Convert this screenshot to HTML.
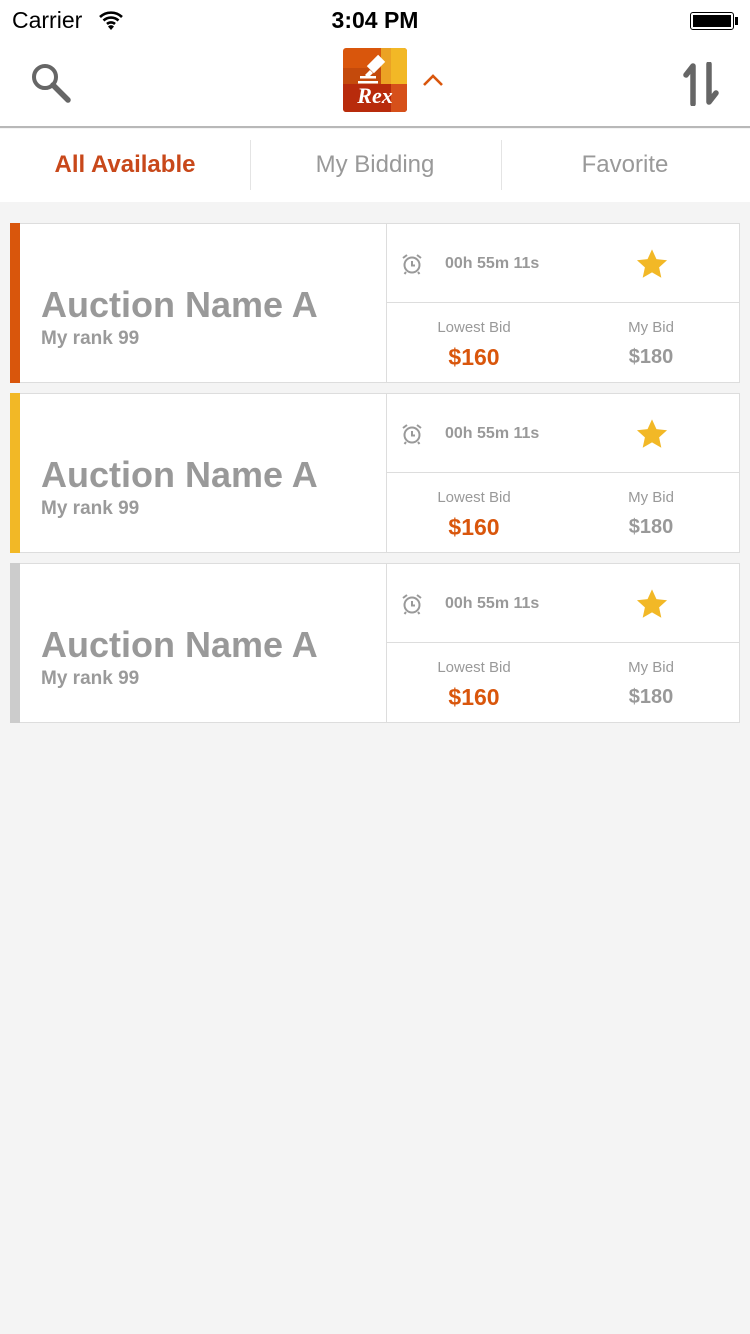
<!DOCTYPE html>
<html><head><meta charset="utf-8"><style>
*{margin:0;padding:0;box-sizing:border-box}
body{width:750px;height:1334px;background:#f4f4f4;font-family:"Liberation Sans",sans-serif;position:relative;overflow:hidden}
.abs{position:absolute}
.top{left:0;top:0;width:750px;height:128px;background:#fff;border-bottom:2px solid #b8b8b8}
.tabs{left:0;top:129px;width:750px;height:73px;background:#fff}
.tab{position:absolute;top:0;height:73px;line-height:72px;text-align:center;font-size:24px;color:#999;width:250px}
.sep{position:absolute;top:11px;width:1px;height:50px;background:#e4e4e4}
.card{position:absolute;left:10px;width:730px;height:160px;background:#fff;border:1px solid #ddd}
.bar{position:absolute;left:-1px;top:-1px;width:10px;height:160px}
.name{position:absolute;left:30px;top:60px;font-size:36px;font-weight:bold;color:#999}
.rank{position:absolute;left:30px;top:104px;font-size:19px;font-weight:bold;color:#9a9a9a}
.vl{position:absolute;left:375px;top:0;width:1px;height:158px;background:#ddd}
.hl{position:absolute;left:375px;top:78px;width:354px;height:1px;background:#ddd}
.time{position:absolute;left:434px;top:31px;font-size:16px;font-weight:bold;color:#999}
.lbl{position:absolute;top:95px;font-size:15px;color:#999;text-align:center;width:150px}
.val{position:absolute;top:120px;font-size:23px;font-weight:bold;text-align:center;width:150px}
</style></head><body>
<div class="abs top">
 <div class="abs" style="left:12px;top:7px;font-size:23px;color:#000">Carrier</div>
 <svg class="abs" style="left:98px;top:10px" width="26" height="20" viewBox="0 0 26 20"><path d="M2 7a16 16 0 0 1 22 0M5.5 10.5a11 11 0 0 1 15 0M9 14a6 6 0 0 1 8 0" stroke="#000" stroke-width="2.6" fill="none"/><path d="M13 20l-3-3.5a4 4 0 0 1 6 0z"/></svg>
 <div class="abs" style="left:0;width:750px;top:7px;text-align:center;font-size:23px;font-weight:bold">3:04 PM</div>
 <div class="abs" style="left:690px;top:12px;width:44px;height:18px;border:1.5px solid #000;border-radius:3px;padding:2px"><div style="background:#000;width:100%;height:100%"></div></div>
 <div class="abs" style="left:735px;top:17px;width:3px;height:8px;background:#000"></div>
 <svg class="abs" style="left:30px;top:62px" width="44" height="42" viewBox="0 0 44 42"><circle cx="15" cy="15" r="11" stroke="#666" stroke-width="4" fill="none"/><path d="M23 23l15 15" stroke="#666" stroke-width="5.5" stroke-linecap="round"/></svg>
 <div class="abs" style="left:343px;top:48px;width:64px;height:64px;border-radius:3px;overflow:hidden;background:#d9560c">
  <div class="abs" style="left:48px;top:0;width:16px;height:36px;background:#f2b826"></div>
  <div class="abs" style="left:38px;top:0;width:10px;height:36px;background:#eba224"></div>
  <div class="abs" style="left:0;top:20px;width:38px;height:16px;background:#c44a0c"></div>
  <div class="abs" style="left:0;top:36px;width:64px;height:28px;background:#b82b0c"></div>
  <div class="abs" style="left:48px;top:36px;width:16px;height:28px;background:#d6501a"></div>
  <svg class="abs" style="left:12px;top:2px" width="40" height="34" viewBox="0 0 40 34"><g fill="#fff"><rect x="16" y="6" width="10" height="16" transform="rotate(45 21 14)"/><path d="M10 25l5-5 3 3-5 5z"/><rect x="5" y="26" width="16" height="2.5"/><rect x="3" y="31" width="20" height="2.5"/></g></svg>
  <div class="abs" style="left:0;width:64px;top:35px;text-align:center;font-family:'Liberation Serif',serif;font-style:italic;font-weight:bold;color:#fff;font-size:22px">Rex</div>
 </div>
 <svg class="abs" style="left:422px;top:73px" width="22" height="14" viewBox="0 0 22 14"><path d="M2 12l9-9 9 9" stroke="#d9560c" stroke-width="2.6" fill="none"/></svg>
 <svg class="abs" style="left:682px;top:62px" width="38" height="44" viewBox="0 0 38 44"><path d="M11 42V4L4 13" stroke="#666" stroke-width="5.5" fill="none" stroke-linecap="round" stroke-linejoin="round"/><path d="M27 2v38l7-9" stroke="#666" stroke-width="5.5" fill="none" stroke-linecap="round" stroke-linejoin="round"/></svg>
</div>
<div class="abs tabs">
 <div class="tab" style="left:0;color:#c8481a;font-weight:bold">All Available</div>
 <div class="sep" style="left:250px"></div>
 <div class="tab" style="left:250px">My Bidding</div>
 <div class="sep" style="left:501px"></div>
 <div class="tab" style="left:500px">Favorite</div>
</div>

<div class="card" style="top:223px"><div class="bar" style="background:#d9560c"></div>
<div class="name">Auction Name A</div><div class="rank">My rank 99</div><div class="vl"></div><div class="hl"></div>
<svg class="abs" style="left:390px;top:29px" width="22" height="22" viewBox="0 0 22 22"><circle cx="11" cy="12" r="7.5" stroke="#999" stroke-width="2" fill="none"/><path d="M11 8v4.5h3M2 5l4-3M20 5l-4-3M5 19l-1.5 2M17 19l1.5 2" stroke="#999" stroke-width="2" fill="none"/></svg>
<div class="time">00h 55m 11s</div>
<svg class="abs" style="left:624px;top:24px" width="34" height="32" viewBox="0 0 24 23"><path d="M12 1l3.2 7 7.6.8-5.7 5.1 1.6 7.5L12 17.5l-6.7 3.9 1.6-7.5L1.2 8.8 8.8 8z" fill="#f2b826"/></svg>
<div class="lbl" style="left:388px">Lowest Bid</div><div class="lbl" style="left:565px">My Bid</div>
<div class="val" style="left:388px;color:#d9560c">$160</div><div class="val" style="left:565px;color:#999;font-size:20px;top:122px">$180</div>
</div>

<div class="card" style="top:393px"><div class="bar" style="background:#f2b826"></div>
<div class="name">Auction Name A</div><div class="rank">My rank 99</div><div class="vl"></div><div class="hl"></div>
<svg class="abs" style="left:390px;top:29px" width="22" height="22" viewBox="0 0 22 22"><circle cx="11" cy="12" r="7.5" stroke="#999" stroke-width="2" fill="none"/><path d="M11 8v4.5h3M2 5l4-3M20 5l-4-3M5 19l-1.5 2M17 19l1.5 2" stroke="#999" stroke-width="2" fill="none"/></svg>
<div class="time">00h 55m 11s</div>
<svg class="abs" style="left:624px;top:24px" width="34" height="32" viewBox="0 0 24 23"><path d="M12 1l3.2 7 7.6.8-5.7 5.1 1.6 7.5L12 17.5l-6.7 3.9 1.6-7.5L1.2 8.8 8.8 8z" fill="#f2b826"/></svg>
<div class="lbl" style="left:388px">Lowest Bid</div><div class="lbl" style="left:565px">My Bid</div>
<div class="val" style="left:388px;color:#d9560c">$160</div><div class="val" style="left:565px;color:#999;font-size:20px;top:122px">$180</div>
</div>

<div class="card" style="top:563px"><div class="bar" style="background:#cccccc"></div>
<div class="name">Auction Name A</div><div class="rank">My rank 99</div><div class="vl"></div><div class="hl"></div>
<svg class="abs" style="left:390px;top:29px" width="22" height="22" viewBox="0 0 22 22"><circle cx="11" cy="12" r="7.5" stroke="#999" stroke-width="2" fill="none"/><path d="M11 8v4.5h3M2 5l4-3M20 5l-4-3M5 19l-1.5 2M17 19l1.5 2" stroke="#999" stroke-width="2" fill="none"/></svg>
<div class="time">00h 55m 11s</div>
<svg class="abs" style="left:624px;top:24px" width="34" height="32" viewBox="0 0 24 23"><path d="M12 1l3.2 7 7.6.8-5.7 5.1 1.6 7.5L12 17.5l-6.7 3.9 1.6-7.5L1.2 8.8 8.8 8z" fill="#f2b826"/></svg>
<div class="lbl" style="left:388px">Lowest Bid</div><div class="lbl" style="left:565px">My Bid</div>
<div class="val" style="left:388px;color:#d9560c">$160</div><div class="val" style="left:565px;color:#999;font-size:20px;top:122px">$180</div>
</div>
</body></html>
